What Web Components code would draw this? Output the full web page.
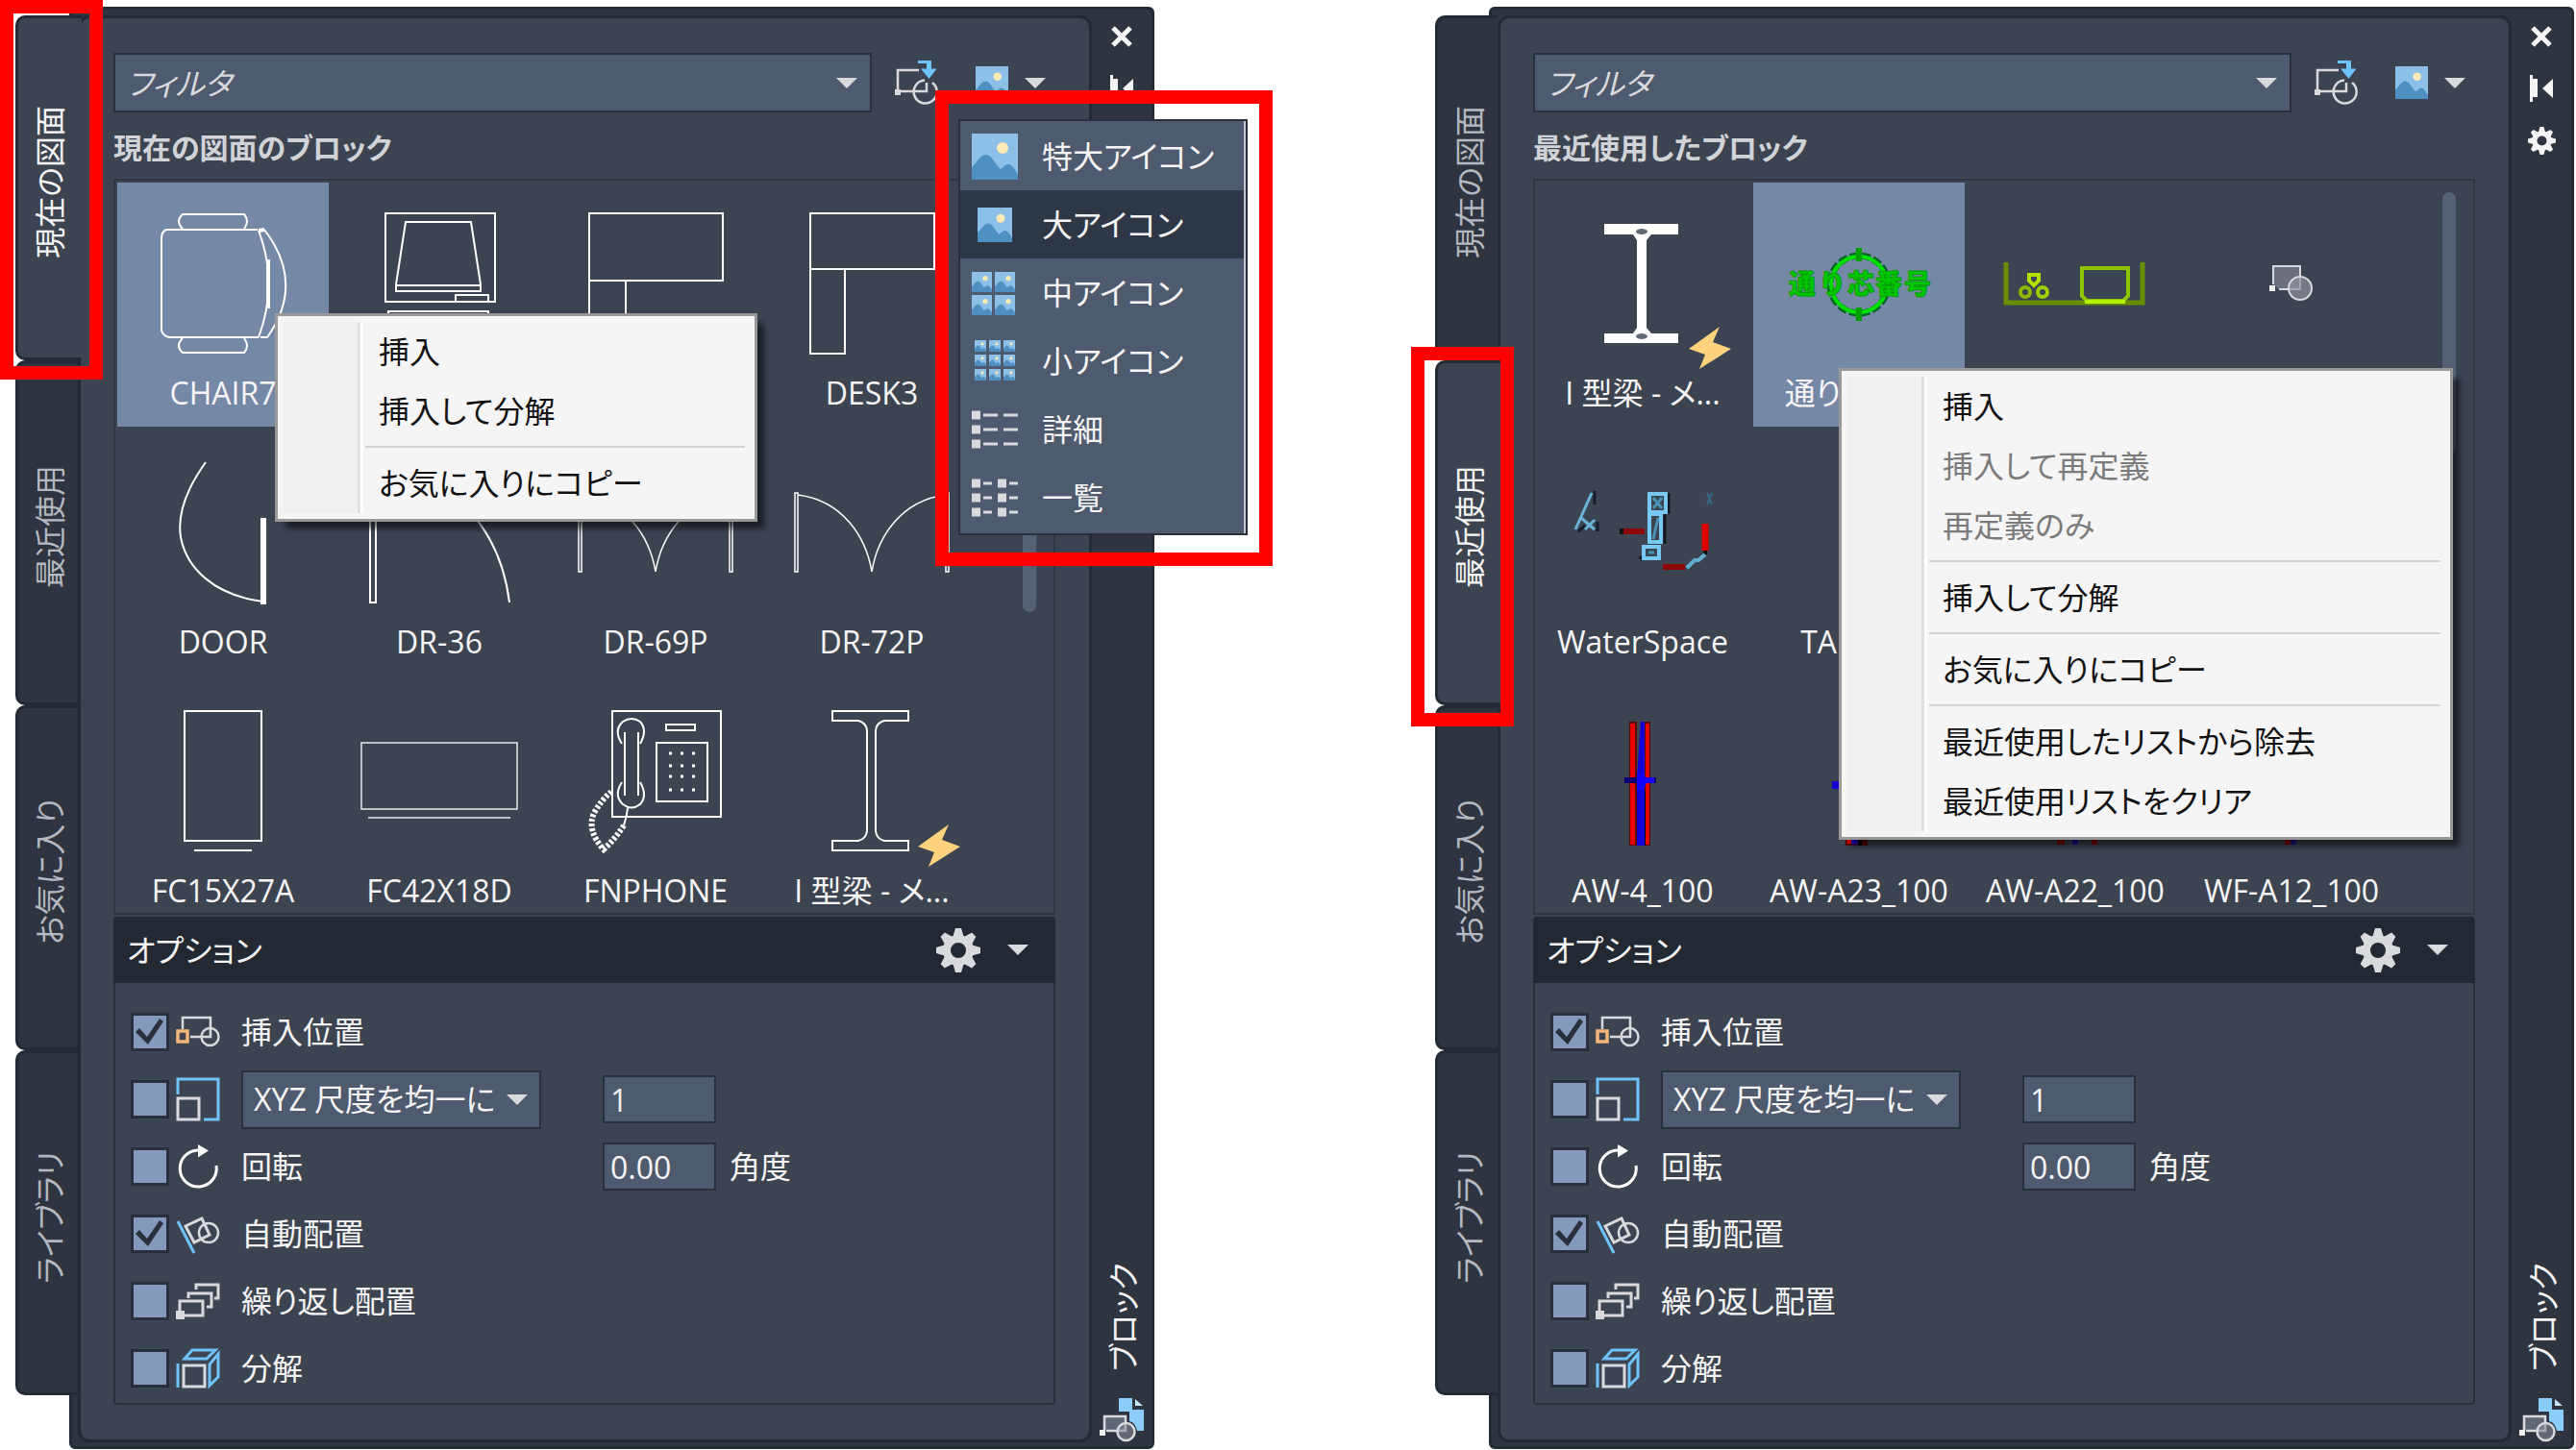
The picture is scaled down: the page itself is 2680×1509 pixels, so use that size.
<!DOCTYPE html>
<html lang="ja">
<head>
<meta charset="utf-8">
<title>ブロック</title>
<style>
body {
    margin: 0;
    background: #fff;
    font-family: "Open Sans", "Noto Sans CJK JP", sans-serif;
    font-size: 32px;
    line-height: 48px;
    font-feature-settings: "palt";
    color: #f5f5f5;
    --panel: #3c4452;
    --frame: #2e3440;
    --edge: #232a34;
    --field: #4e5a6d;
    --field-edge: #29303b;
}
</style>
</head>
<body>
<block-page>
    <palette-window heading="現在の図面のブロック" active="0" thumb="437">
        <block-item name="CHAIR7" selected>
            <svg viewBox="0 0 220 150"><g fill="none" stroke="#fff" stroke-width="2"><path d="M146 19H51Q46 21 46 28V124Q48 130 54 131H147"/><path d="M68 18Q60 10 68 3H132Q138 10 132 18M68 132Q60 140 68 147H132Q138 140 132 132"/><path d="M147 20Q168 75 147 131M153 19Q196 75 156 131H149"/><path d="M147 20L153 19M157 50V101" stroke-width="4"/></g></svg>
        </block-item>
        <block-item>
            <svg viewBox="0 0 220 150"><g fill="none" stroke="#fff" stroke-width="2"><path d="M54 2H168V94H54ZM75 11H143L153 76V83H65V76ZM65 77H153M127 93V87H161V93M57 140V104H161V140"/></g></svg>
        </block-item>
        <block-item>
            <svg viewBox="0 0 220 150"><path d="M41 2H180V72H41ZM41 72V149H79V72" fill="none" stroke="#fff" stroke-width="2"/></svg>
        </block-item>
        <block-item name="DESK3">
            <svg viewBox="0 0 220 150"><path d="M46 2H175V60H46ZM46 60V148H82V60" fill="none" stroke="#fff" stroke-width="2"/></svg>
        </block-item>
        <block-item name="DOOR">
            <svg viewBox="0 0 220 150"><path d="M92 2C72 30 62 55 66 80C72 112 100 140 151 147" fill="none" stroke="#fff" stroke-width="2"/><path d="M149 60h6v90h-6z" fill="#fff"/></svg>
        </block-item>
        <block-item name="DR-36">
            <svg viewBox="0 0 220 150"><path d="M38 0V148H44V0M44 2C110 10 172 60 183 148" fill="none" stroke="#fff" stroke-width="2"/></svg>
        </block-item>
        <block-item name="DR-69P">
            <svg viewBox="0 0 220 150"><path d="M33 34H30V116H33ZM187 34H190V116H187ZM33 36C80 42 104 80 110 116C116 80 140 42 187 36" fill="none" stroke="#fff" stroke-width="1.5"/></svg>
        </block-item>
        <block-item name="DR-72P">
            <svg viewBox="0 0 220 150"><path d="M33 34H30V116H33ZM187 34H190V116H187ZM33 36C80 42 104 80 110 116C116 80 140 42 187 36" fill="none" stroke="#fff" stroke-width="1.5"/></svg>
        </block-item>
        <block-item name="FC15X27A">
            <svg viewBox="0 0 220 150"><path d="M70 2H150V137H70ZM80 147H140" fill="none" stroke="#fff" stroke-width="2"/></svg>
        </block-item>
        <block-item name="FC42X18D">
            <svg viewBox="0 0 220 150"><path d="M29 35H191V104H29ZM36 113H184" fill="none" stroke="#e8e9eb" stroke-width="1.5"/></svg>
        </block-item>
        <block-item name="FNPHONE">
            <svg viewBox="0 0 220 150"><g fill="none" stroke="#fff" stroke-width="2"><path d="M65 2H178V112H65ZM121 16H151V22H121ZM111 35H164V96H111ZM78 24V90M92 24V90"/><path d="M75 36Q66 22 76 13Q85 7 94 13Q102 22 94 36M75 76Q66 90 76 99Q85 106 94 99Q102 90 94 76M81 103Q80 112 77 121"/><path d="M77 121Q68 135 56 146Q38 126 46 108Q54 94 64 86" stroke-width="6" stroke-dasharray="3 2"/></g><path d="M124 46h28M124 59h28M124 70h28M124 84h28" stroke="#fff" stroke-width="3" stroke-dasharray="3 9"/></svg>
        </block-item>
        <block-item name="I 型梁 - メ...">
            <svg viewBox="0 0 220 150"><path d="M69 2H148V12H123Q115 14 114 22V127Q115 135 123 137H148V147H69V137H96Q104 135 105 127V22Q104 14 96 12H69Z" fill="none" stroke="#fff" stroke-width="2"/><path d="M190 120L158 143L175 149L169 164L202 143L183 136Z" fill="#ffd27d"/></svg>
        </block-item>
    </palette-window>

    <palette-window heading="最近使用したブロック" active="1" thumb="272">
        <block-item name="I 型梁 - メ...">
            <svg viewBox="0 0 220 150"><path d="M70 13H147V24H119L114 30V121L119 127H147V137H70V127H100L104 121V30L100 24H70Z" fill="#fff"/><ellipse cx="109" cy="21" rx="6" ry="3" fill="#636974"/><ellipse cx="109" cy="130" rx="6" ry="3" fill="#636974"/><path d="M190 120L158 143L175 149L169 164L202 143L183 136Z" fill="#ffd27d"/></svg>
        </block-item>
        <block-item name="通り芯番号" selected>
            <svg viewBox="0 0 220 150"><circle cx="110" cy="76" r="30" fill="none" stroke="#062" stroke-width="7" stroke-dasharray="9 3"/><circle cx="110" cy="76" r="29" fill="none" stroke="#00e000" stroke-width="4"/><path d="M110 38V52M110 100V114" stroke="#00a000" stroke-width="6"/><text x="37 71 98 127 157" y="86" font-size="28" font-weight="900" fill="#00c800" stroke="#00a000">通り芯番号</text></svg>
        </block-item>
        <block-item>
            <svg viewBox="0 0 220 150"><g fill="none"><path d="M38 53V95H180V53" stroke="#6b8e00" stroke-width="5"/><path d="M117 59H165V88L160 93H122L117 88Z" stroke="#8fc400" stroke-width="4"/><path d="M120 94H162" stroke="#b0f000" stroke-width="4"/><path d="M62 66H72V72L67 77L62 72Z" stroke="#b4e000" stroke-width="4"/><circle cx="58" cy="84" r="5" stroke="#8fb800" stroke-width="4"/><circle cx="76" cy="84" r="5" stroke="#a0d000" stroke-width="4"/></g></svg>
        </block-item>
        <block-item>
            <svg viewBox="0 0 220 150"><path d="M91 76V57H119V81H97" fill="#6b707c" stroke="#d9dade" stroke-width="2"/><circle cx="119" cy="80" r="12" fill="#8d919b" fill-opacity=".7" stroke="#d9dade" stroke-width="2"/><path d="M87 77h6v6h-6z" fill="#f0f0f0"/></svg>
        </block-item>
        <block-item name="WaterSpace">
            <svg viewBox="0 0 220 150"><g fill="none"><path d="M60 32V46M43 74L50 68M63 64V74" stroke="#141c28" stroke-width="3"/><path d="M57 34L40 72M46 60L60 72M60 62L50 72" stroke="#69b5d8" stroke-width="3"/><path d="M137 34V56M133 56V87M110 104L107 100" stroke="#111820" stroke-width="3"/><path d="M117 35H134V54H117ZM117 56H129V85H117ZM111 90H127V102H111Z" stroke="#78c8f4" stroke-width="4"/><path d="M121 39L130 50M130 39L121 50M126 60L121 82M116 96H122" stroke="#4a93b8" stroke-width="3"/><path d="M88 74H112M131 111H154" stroke="#8c0808" stroke-width="6"/><path d="M88 71V77M175 94V98" stroke="#111" stroke-width="4"/><path d="M175 66V94" stroke="#e00000" stroke-width="7"/><path d="M156 112L164 104L168 104L175 98" stroke="#5eaed0" stroke-width="4"/><path d="M177 34L182 46M182 34L177 46" stroke="#356884" stroke-width="2"/></g></svg>
        </block-item>
        <block-item name="TABLE-1"><svg viewBox="0 0 220 150"></svg></block-item>
        <block-item><svg viewBox="0 0 220 150"></svg></block-item>
        <block-item><svg viewBox="0 0 220 150"></svg></block-item>
        <block-item name="AW-4_100">
            <svg viewBox="0 0 220 150"><path d="M96 13h22v129h-22z" fill="#5c0608"/><path d="M97 15h5v126h-5zM113 15h4v126h-4z" fill="#e80000"/><path d="M104 13h4v56h-4z" fill="#3c4452"/><path d="M109 85h4v56h-4z" fill="#05050c"/><path d="M108 13h4v129h-8v-70z" fill="#1600d8"/><path d="M91 71h33v6h-33z" fill="#0a0070"/><path d="M104 68h8v3h10v6h-8l-4 8h-6z" fill="#1400ff"/></svg>
        </block-item>
        <block-item name="AW-A23_100">
            <svg viewBox="0 0 220 150"><path d="M82 75h12v8h-12z" fill="#1400d0"/><path d="M96 130h23v12h-23z" fill="#600"/><path d="M98 130h4v10h-4z" fill="#f00"/><path d="M102 130h7v11h-7z" fill="#2a10e0"/><path d="M109 130h4v12h-4z" fill="#000"/></svg>
        </block-item>
        <block-item name="AW-A22_100">
            <svg viewBox="0 0 220 150"><path d="M91 132h8v9h-8zM127 132h6v9h-6z" fill="#800"/><path d="M107 132h6v9h-6z" fill="#1a10a0"/></svg>
        </block-item>
        <block-item name="WF-A12_100">
            <svg viewBox="0 0 220 150"><path d="M103 132h6v9h-6z" fill="#800"/><path d="M109 132h6v9h-6z" fill="#1a1690"/></svg>
        </block-item>
    </palette-window>

    <context-menu slot="overlay" style="left: 286px; top: 326px; width: 502px">
        <menu-entry>挿入</menu-entry>
        <menu-entry>挿入して分解</menu-entry>
        <menu-line></menu-line>
        <menu-entry>お気に入りにコピー</menu-entry>
    </context-menu>

    <context-menu slot="overlay" style="left: 1913px; top: 383px; width: 639px">
        <menu-entry>挿入</menu-entry>
        <menu-entry disabled>挿入して再定義</menu-entry>
        <menu-entry disabled>再定義のみ</menu-entry>
        <menu-line></menu-line>
        <menu-entry>挿入して分解</menu-entry>
        <menu-line></menu-line>
        <menu-entry>お気に入りにコピー</menu-entry>
        <menu-line></menu-line>
        <menu-entry>最近使用したリストから除去</menu-entry>
        <menu-entry>最近使用リストをクリア</menu-entry>
    </context-menu>

    <view-menu slot="overlay" style="left: 997px; top: 124px; width: 301px"></view-menu>

    <red-frame slot="overlay" style="left: 0; top: 0; width: 107px; height: 395px"></red-frame>
    <red-frame slot="overlay" style="left: 973px; top: 94px; width: 351px; height: 495px"></red-frame>
    <red-frame slot="overlay" style="left: 1468px; top: 361px; width: 107px; height: 395px"></red-frame>
</block-page>

<script>
// icons
const picture = `<rect width="48" height="48" fill="#8cc0e8"/><circle cx="32" cy="15" r="6" fill="#fdeab4"/><path d="M0 35C6 29 9 22 15 22C21 22 24 32 30 37C33 35 35 32 38 32C42 32 45 37 48 43V48H0Z" fill="#4f90c3"/>`
const tiles = (n, size, step, start) => {
    let out = ""
    for (let i = 0; i < n * n; i++) {
        const x = start + (i % n) * step
        const y = 2 + Math.floor(i / n) * step
        out += `<svg x="${x}" y="${y}" width="${size}" height="${size}" viewBox="0 0 48 48">${picture}</svg>`
    }
    return out
}
const teeth = [0, 45, 90, 135, 180, 225, 270, 315]
    .map(a => `<path d="M17 10L20 0H26L29 10Z" transform="rotate(${a} 23 23)"/>`).join("")
const gear = color => `<svg viewBox="0 0 46 46"><g fill="${color}">${teeth}</g><circle cx="23" cy="23" r="12" fill="none" stroke="${color}" stroke-width="8"/></svg>`
const arrow = `<svg class="arrow" width="22" height="11" viewBox="0 0 22 11"><path d="M0 0H22L11 11Z" fill="#d9dade"/></svg>`

const icons = {
    insert: `<svg viewBox="0 0 46 46"><g fill="none" stroke="#d9dade" stroke-width="2.5"><path d="M25 10H3V32H33V23"/><path d="M39 23A12 12 0 1 1 31 20.5"/></g><path d="M0 30h6v6h-6z" fill="#d9dade"/><path d="M24 0H38V8.5H43.5L35.5 19L27 8.5H33V3H24Z" fill="#6ec3fb"/></svg>`,
    picture: `<svg viewBox="0 0 48 48">${picture}</svg>`,
    close: `<svg width="22" height="22" viewBox="0 0 22 22"><path d="M2 2L20 20M20 2L2 20" stroke="#f5f5f5" stroke-width="5"/></svg>`,
    pin: `<svg width="24" height="28" viewBox="0 0 24 28"><path d="M0 0H3V4H8V23H3V28H0ZM24 4V24L13 14Z" fill="#f5f5f5"/></svg>`,
    block: `<svg width="46" height="46" viewBox="0 0 46 46"><path d="M20 0H34V12H46V34H39Q37 25 31 24V14H20Z" fill="#8bcdfa"/><path d="M37 1L45 8H37Z" fill="#c5e5fb"/><path d="M5 33V19H27V34H7" fill="#5f6674" stroke="#d9dade" stroke-width="2.5"/><circle cx="27.5" cy="35" r="9" fill="#868b95" fill-opacity=".6" stroke="#d9dade" stroke-width="2.5"/><path d="M0 33h6v6h-6z" fill="#f0f0f0"/></svg>`,
    place: `<svg viewBox="0 0 46 46"><path d="M7 20V8H36V28H15" fill="none" stroke="#d9dade" stroke-width="2.5"/><circle cx="35.5" cy="28" r="9" fill="none" stroke="#d9dade" stroke-width="2.5"/><path d="M2 22H12V33H2Z" fill="none" stroke="#f3b57a" stroke-width="3.5"/></svg>`,
    scale: `<svg viewBox="0 0 46 46"><path d="M2 18V2H44V44H29" fill="none" stroke="#6ec3fb" stroke-width="3"/><path d="M2 22H24V44H2Z" fill="none" stroke="#d9dade" stroke-width="3"/></svg>`,
    rotate: `<svg viewBox="0 0 46 46"><path d="M23 6A19 19 0 1 0 42 22" fill="none" stroke="#fff" stroke-width="3"/><path d="M23 0L34 6.5L23 13.5Z" fill="#fff"/></svg>`,
    auto: `<svg viewBox="0 0 46 46"><path d="M2 10L19 43" stroke="#6ec3fb" stroke-width="3"/><path d="M10 15L27 7L35 24L19 32Z" fill="none" stroke="#d9dade" stroke-width="3"/><circle cx="34" cy="22" r="10" fill="none" stroke="#d9dade" stroke-width="2.5"/></svg>`,
    repeat: `<svg viewBox="0 0 46 46"><g fill="none" stroke="#d9dade" stroke-width="3"><path d="M4 23H28V38H4ZM13 20V15H37V29H32M21 11V6H44V20H40"/></g><path d="M0 33h9v9h-9z" fill="#d9dade"/></svg>`,
    explode: `<svg viewBox="0 0 46 46"><path d="M8 20H30V42H8Z" fill="none" stroke="#d9dade" stroke-width="3"/><path d="M2 18V43M9 13L17 4H41L32 13ZM35 19L44 8V32L35 41Z" fill="none" stroke="#6ec3fb" stroke-width="3"/></svg>`,
    xlarge: `<svg width="48" height="48" viewBox="0 0 48 48">${picture}</svg>`,
    large: `<svg width="48" height="48" viewBox="0 0 48 48"><svg x="6" y="6" width="36" height="36" viewBox="0 0 48 48">${picture}</svg></svg>`,
    medium: `<svg width="48" height="48" viewBox="0 0 48 48">${tiles(2, 21, 24, 0)}</svg>`,
    small: `<svg width="48" height="48" viewBox="0 0 48 48">${tiles(3, 12, 15, 3)}</svg>`,
    detail: `<svg width="48" height="48" viewBox="0 0 48 48"><path d="M0 9H9M0 24H9M0 39H9" stroke="#d9dade" stroke-width="9"/><path d="M12 9H27M33 9H48M12 24H27M33 24H48M12 39H27M33 39H48" stroke="#d9dade" stroke-width="3"/></svg>`,
    list: `<svg width="48" height="48" viewBox="0 0 48 48"><path d="M0 9H9M0 24H9M0 39H9M27 9H36M27 24H36M27 39H36" stroke="#d9dade" stroke-width="9"/><path d="M12 9H21M39 9H48M12 24H21M39 24H48M12 39H21M39 39H48" stroke="#d9dade" stroke-width="3"/></svg>`
}

const attach = (el, html) => {
    const template = document.createElement("template")
    template.innerHTML = html
    const shadow = el.attachShadow({ mode: "open" })
    shadow.appendChild(template.content.cloneNode(true))
    return shadow
}

class BlockPage extends HTMLElement {
    constructor() {
        super()
        attach(this, `
        <style>
        :host {
            display: block;
            position: relative;
        }

        main {
            display: grid;
            grid-template-columns: 1fr 1fr;
            column-gap: 292px;
            padding: 7px 2px 0 16px;
        }
        </style>
        <main><slot></slot></main>
        <slot name="overlay"></slot>
        `)
    }
}

class PaletteWindow extends HTMLElement {
    constructor() {
        super()
        const active = Number(this.getAttribute("active"))
        const tabs = ["現在の図面", "最近使用", "お気に入り", "ライブラリ"]
        const shadow = attach(this, `
        <style>
        :host {
            display: flex;
            min-width: 0;
        }

        nav {
            display: flex;
            flex-direction: column;
            width: 65px;
            margin: 9px -9px 0 0;
            z-index: 1;
        }

        nav button {
            height: 359px;
            box-sizing: border-box;
            padding: 0 0 0 4px;
            border: 3px solid var(--edge);
            border-right: 0;
            border-radius: 10px 0 0 10px;
            background: var(--frame);
            color: #b4b8c0;
            font: inherit;
            font-feature-settings: inherit;
        }

        nav button.active {
            margin-right: -4px;
            padding-right: 4px;
            background: var(--panel);
            color: #f5f5f5;
        }

        .side {
            display: inline-block;
            writing-mode: vertical-rl;
            text-orientation: sideways;
            transform: rotate(180deg);
        }

        .frame {
            flex: 1;
            min-width: 0;
            display: flex;
            padding: 6px 0 4px 6px;
            border: 3px solid var(--edge);
            border-radius: 6px;
            background: var(--frame);
        }

        .body {
            flex: 1;
            min-width: 0;
            padding: 36px 35px 36px 34px;
            border: 3px solid var(--edge);
            border-radius: 12px;
            background: var(--panel);
        }

        .tools {
            display: flex;
            align-items: center;
            padding-right: 10px;
        }

        .filter {
            flex: 1;
            display: flex;
            min-width: 0;
            border: 2px solid var(--field-edge);
            background: var(--field);
        }

        .filter input {
            flex: 1;
            min-width: 0;
            height: 58px;
            box-sizing: border-box;
            padding: 0 12px;
            border: 0;
            background: none;
            color: inherit;
            font: inherit;
            font-style: italic;
            font-feature-settings: inherit;
        }

        .filter input::placeholder {
            color: #d9dade;
            opacity: 1;
        }

        .icon {
            display: flex;
            padding: 0;
            border: 0;
            background: none;
        }

        .filter .icon {
            align-items: center;
            padding-right: 13px;
        }

        .add {
            width: 46px;
            margin-left: 24px;
        }

        .view {
            align-items: center;
            gap: 17px;
            margin-left: 38px;
        }

        .view svg:first-child {
            width: 34px;
        }

        h2 {
            margin: 0;
            padding-top: 4px;
            color: #d0d3d8;
            font-size: 30px;
            line-height: 65px;
        }

        .list {
            display: flex;
            height: 762px;
            padding-left: 2px;
            border: 2px solid #2f3642;
            overflow: hidden;
        }

        .grid {
            flex: 1;
            display: grid;
            grid-template-columns: repeat(4, minmax(0, 1fr));
            align-content: start;
            gap: 5px;
            padding-top: 2px;
        }

        .thumb {
            width: 14px;
            margin: 12px 18px 0 47px;
            border-radius: 7px;
            background: #566173;
        }
        </style>
        <nav>${tabs.map((t, i) => `<button class="${i === active ? "active" : ""}"><span class="side">${t}</span></button>`).join("")}</nav>
        <div class="frame">
            <div class="body">
                <div class="tools">
                    <div class="filter">
                        <input type="text" placeholder="フィルタ" aria-label="フィルタ">
                        <button class="icon" aria-label="履歴">${arrow}</button>
                    </div>
                    <button class="icon add" aria-label="挿入">${icons.insert}</button>
                    <button class="icon view" aria-label="表示">${icons.picture}${arrow}</button>
                </div>
                <h2></h2>
                <div class="list">
                    <div class="grid"><slot></slot></div>
                    <div class="thumb"></div>
                </div>
                <insert-options></insert-options>
            </div>
            <title-strip></title-strip>
        </div>
        `)
        shadow.querySelector("h2").textContent = this.getAttribute("heading")
        shadow.querySelector(".thumb").style.height = this.getAttribute("thumb") + "px"
    }
}

class TitleStrip extends HTMLElement {
    constructor() {
        super()
        attach(this, `
        <style>
        :host {
            display: flex;
            flex-direction: column;
            align-items: center;
            width: 62px;
        }

        button {
            display: grid;
            place-items: center;
            width: 48px;
            height: 54px;
            padding: 0;
            border: 0;
            background: none;
        }

        button:first-child, .close {
            height: 44px;
            margin-bottom: 5px;
        }

        .gear svg {
            width: 29px;
        }

        span {
            margin-top: auto;
            padding-right: 4px;
            writing-mode: vertical-rl;
            text-orientation: sideways;
            transform: rotate(180deg);
        }

        .block {
            display: flex;
            margin-top: 28px;
        }
        </style>
        <button class="close" aria-label="閉じる">${icons.close}</button>
        <button aria-label="自動的に隠す">${icons.pin}</button>
        <button class="gear" aria-label="プロパティ">${gear("#f5f5f5")}</button>
        <span>ブロック</span>
        <div class="block">${icons.block}</div>
        `)
    }
}

class BlockItem extends HTMLElement {
    constructor() {
        super()
        const shadow = attach(this, `
        <style>
        :host {
            display: flex;
            flex-direction: column;
            align-items: center;
            gap: 15px;
            height: 254px;
            box-sizing: border-box;
            padding-top: 30px;
        }

        :host([selected]) {
            background: #7588a6;
        }

        ::slotted(svg) {
            width: 220px;
            height: 150px;
            overflow: visible;
        }

        p {
            margin: 0;
            white-space: nowrap;
        }
        </style>
        <slot></slot>
        <p></p>
        `)
        shadow.querySelector("p").textContent = this.getAttribute("name")
    }
}

class InsertOptions extends HTMLElement {
    constructor() {
        super()
        attach(this, `
        <style>
        :host {
            display: block;
            margin-top: 2px;
        }

        header {
            display: flex;
            align-items: center;
            height: 69px;
            padding: 0 28px 0 14px;
            border-radius: 4px 4px 0 0;
            background: #222932;
        }

        header span {
            flex: 1;
        }

        header button {
            display: flex;
            width: 46px;
            margin-right: 28px;
            padding: 0;
            border: 0;
            background: none;
        }

        header button:last-child {
            width: 22px;
            margin-right: 0;
        }

        header svg {
            width: 100%;
        }

        form {
            padding: 16px 16px 1px;
            border: 2px solid var(--field-edge);
            border-top: 0;
            border-radius: 0 0 4px 4px;
        }

        .row {
            display: grid;
            grid-template-columns: 40px 46px 312px 118px auto;
            column-gap: 7px;
            align-items: center;
            justify-content: start;
            height: 70px;
        }

        .row > :nth-child(3) {
            margin-left: 15px;
            margin-right: -15px;
        }

        .row > :nth-child(4) {
            margin-left: 72px;
            margin-right: -72px;
        }

        .row > :nth-child(5) {
            margin-left: 79px;
        }

        input[type="checkbox"] {
            appearance: none;
            width: 40px;
            height: 40px;
            box-sizing: border-box;
            margin: 0;
            border: 3px solid var(--field-edge);
            background: #8599bc;
        }

        input[type="checkbox"]:checked::before {
            content: "";
            display: block;
            width: 34px;
            height: 34px;
            background: #29303b;
            clip-path: polygon(2px 17px, 6px 13px, 14px 22px, 27px 3px, 31px 6px, 15px 30px);
        }

        .row svg {
            width: 46px;
            height: 46px;
        }

        select, input[type="text"] {
            appearance: none;
            box-sizing: border-box;
            border: 2px solid var(--field-edge);
            border-radius: 0;
            background: var(--field);
            color: inherit;
            font: inherit;
            font-feature-settings: inherit;
        }

        input[type="text"] {
            height: 50px;
            width: 118px;
            padding: 0 6px;
        }

        select {
            width: 312px;
            height: 61px;
            padding: 0 48px 0 11px;
        }

        .pick {
            display: grid;
            align-items: center;
            width: 312px;
        }

        .pick > * {
            grid-area: 1 / 1;
        }

        .pick .arrow {
            width: 22px;
            height: 11px;
            justify-self: end;
            margin-right: 14px;
            pointer-events: none;
        }
        </style>
        <header>
            <span>オプション</span>
            <button aria-label="設定">${gear("#d9dade")}</button>
            <button aria-label="折りたたむ">${arrow}</button>
        </header>
        <form>
            <div class="row"><input type="checkbox" id="place" checked>${icons.place}<label for="place">挿入位置</label></div>
            <div class="row">
                <input type="checkbox" id="scale" aria-label="尺度">${icons.scale}
                <div class="pick"><select aria-label="尺度の種類"><option>XYZ 尺度を均一に</option></select>${arrow}</div>
                <input type="text" value="1" aria-label="尺度">
            </div>
            <div class="row">
                <input type="checkbox" id="rotate">${icons.rotate}<label for="rotate">回転</label>
                <input type="text" id="angle" value="0.00"><label for="angle">角度</label>
            </div>
            <div class="row"><input type="checkbox" id="auto" checked>${icons.auto}<label for="auto">自動配置</label></div>
            <div class="row"><input type="checkbox" id="repeat">${icons.repeat}<label for="repeat">繰り返し配置</label></div>
            <div class="row"><input type="checkbox" id="explode">${icons.explode}<label for="explode">分解</label></div>
        </form>
        `)
    }
}

class ContextMenu extends HTMLElement {
    constructor() {
        super()
        attach(this, `
        <style>
        :host {
            position: absolute;
            z-index: 2;
            box-sizing: border-box;
            padding: 6px;
            border: 3px solid #999;
            background: linear-gradient(90deg, #f0f0f0 77px, #e0e0e0 77px 80px, #fff 80px 83px, #f5f5f5 83px) 6px 6px / calc(100% - 12px) calc(100% - 12px) no-repeat #f5f5f5;
            box-shadow: 9px 9px 6px -2px rgba(0, 0, 0, .55);
        }
        </style>
        <slot></slot>
        `)
    }
}

class MenuEntry extends HTMLElement {
    constructor() {
        super()
        const shadow = attach(this, `
        <style>
        :host {
            display: block;
        }

        button {
            display: block;
            width: 100%;
            height: 62px;
            padding: 0 0 0 99px;
            border: 0;
            background: none;
            color: #111;
            font: inherit;
            font-feature-settings: inherit;
            text-align: left;
        }

        button:disabled {
            color: #7b7b7b;
        }
        </style>
        <button><slot></slot></button>
        `)
        shadow.querySelector("button").disabled = this.hasAttribute("disabled")
    }
}

class MenuLine extends HTMLElement {
    constructor() {
        super()
        attach(this, `
        <style>
        :host {
            display: block;
            height: 2px;
            margin: 5px 4px 6px 85px;
            background: #d4d4d4;
        }
        </style>
        `)
    }
}

class ViewMenu extends HTMLElement {
    constructor() {
        super()
        const items = [
            ["xlarge", "特大アイコン"],
            ["large", "大アイコン"],
            ["medium", "中アイコン"],
            ["small", "小アイコン"],
            ["detail", "詳細"],
            ["list", "一覧"]
        ]
        attach(this, `
        <style>
        :host {
            position: absolute;
            z-index: 2;
            box-sizing: border-box;
            border: 2px solid var(--field-edge);
            background: var(--field);
        }

        div {
            padding: 1px 0 2px;
            border-right: 2px solid #c3c8d0;
        }

        button {
            display: flex;
            align-items: center;
            gap: 25px;
            width: 100%;
            height: 71px;
            padding: 0 12px;
            border: 0;
            background: none;
            color: inherit;
            font: inherit;
            font-feature-settings: inherit;
        }

        button.current {
            background: #2e3745;
        }
        </style>
        <div>${items.map(([icon, text]) => `<button class="${icon === "large" ? "current" : ""}">${icons[icon]}${text}</button>`).join("")}</div>
        `)
    }
}

class RedFrame extends HTMLElement {
    constructor() {
        super()
        attach(this, `
        <style>
        :host {
            position: absolute;
            z-index: 3;
            box-sizing: border-box;
            border: 14px solid #f00;
            pointer-events: none;
        }
        </style>
        `)
    }
}

customElements.define("menu-line", MenuLine)
customElements.define("menu-entry", MenuEntry)
customElements.define("context-menu", ContextMenu)
customElements.define("view-menu", ViewMenu)
customElements.define("red-frame", RedFrame)
customElements.define("block-item", BlockItem)
customElements.define("insert-options", InsertOptions)
customElements.define("title-strip", TitleStrip)
customElements.define("palette-window", PaletteWindow)
customElements.define("block-page", BlockPage)
</script>
</body>
</html>
